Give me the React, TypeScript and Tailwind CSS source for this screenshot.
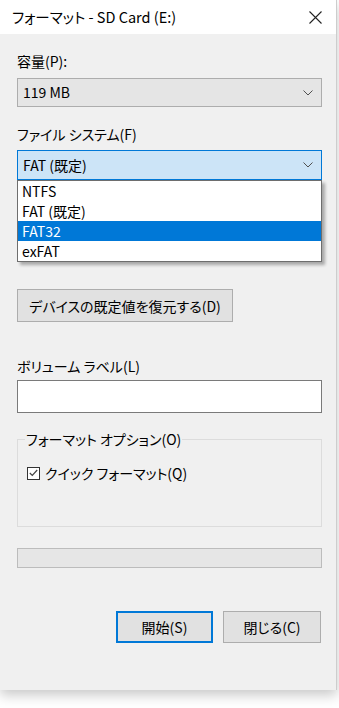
import React from 'react';

const fs = ['NTFS', 'FAT (既定)', 'FAT32', 'exFAT'];

function Chevron() {
  return (
    <svg width="10" height="6" viewBox="0 0 10 6" className="shrink-0">
      <polyline points="0.5,0.5 5,5 9.5,0.5" fill="none" stroke="#505050" strokeWidth="1" />
    </svg>
  );
}

export default function App() {
  return (
    <div className="w-[339px] h-[708px] bg-white overflow-hidden text-[14px] text-black font-['Noto_Sans_CJK_JP','Noto_Sans',sans-serif] [font-feature-settings:'palt']">
      <div className="w-[337px] h-[690px] bg-[#f0f0f0] border-r border-[#cdcdcd] shadow-[0_5px_12px_rgba(0,0,0,0.22)] flex flex-col">
        {/* title bar */}
        <div className="h-[34px] bg-white flex items-center justify-between pl-[12px] pr-[14px]">
          <span className="text-[14.5px] leading-[20px]">フォーマット - SD Card (E:)</span>
          <svg width="13" height="13" viewBox="0 0 13 13">
            <path d="M0.5 0.5L12.5 12.5M12.5 0.5L0.5 12.5" stroke="#222" strokeWidth="1.1" />
          </svg>
        </div>

        <div className="flex flex-col pl-[17px] pr-[14px]">
          <div className="mt-[17px] leading-[20px]">容量(P):</div>
          <div className="mt-[7px] h-[29px] bg-[#e5e5e5] border border-[#adadad] flex items-center justify-between pl-[5px] pr-[8px]">
            <span>119 MB</span>
            <Chevron />
          </div>

          <div className="mt-[17px] leading-[20px]">ファイル システム(F)</div>
          <div className="relative mt-[6px]">
            <div className="h-[30px] bg-[#cce4f7] border border-[#0078d7] flex items-center justify-between pl-[5px] pr-[8px]">
              <span>FAT (既定)</span>
              <Chevron />
            </div>
            {/* open list */}
            <div className="absolute left-0 right-0 top-[30px] z-10 bg-white border border-[#6e6e6e] shadow-[3px_3px_3px_rgba(0,0,0,0.3)] flex flex-col">
              {fs.map((f) => (
                <div
                  key={f}
                  className={
                    f === 'FAT32'
                      ? 'h-[20px] leading-[20px] pl-[4px] bg-[#0078d7] text-white'
                      : 'h-[20px] leading-[20px] pl-[4px]'
                  }
                >
                  {f}
                </div>
              ))}
            </div>
          </div>

          <div className="h-[109px]" />

          <button className="w-[216px] h-[33px] bg-[#e1e1e1] border border-[#adadad] leading-[20px]">
            デバイスの既定値を復元する(D)
          </button>

          <div className="mt-[34px] leading-[20px]">ボリューム ラベル(L)</div>
          <div className="mt-[4px] h-[33px] bg-white border border-[#7a7a7a]" />

          <fieldset className="mt-[16px] h-[98px] border border-[#dcdcdc] pl-[9px]">
            <legend className="-ml-[2px] px-[1px] leading-[20px]">フォーマット オプション(O)</legend>
            <div className="mt-[14px] flex items-center gap-[5px]">
              <span className="w-[13px] h-[13px] bg-white border border-[#333] flex items-center justify-center">
                <svg width="9" height="8" viewBox="0 0 9 8">
                  <polyline points="0.8,4 3.3,6.5 8.2,1" fill="none" stroke="#444" strokeWidth="1.2" />
                </svg>
              </span>
              <span className="leading-[20px]">クイック フォーマット(Q)</span>
            </div>
          </fieldset>

          <div className="mt-[21px] h-[20px] bg-[#e6e6e6] border border-[#bcbcbc]" />

          <div className="mt-[43px] flex justify-end gap-[10px] pr-[1px]">
            <button className="w-[97px] h-[32px] bg-[#e1e1e1] border-2 border-[#0078d7] leading-[20px]">開始(S)</button>
            <button className="w-[98px] h-[32px] bg-[#e1e1e1] border border-[#adadad] leading-[20px]">閉じる(C)</button>
          </div>
        </div>
      </div>
    </div>
  );
}
